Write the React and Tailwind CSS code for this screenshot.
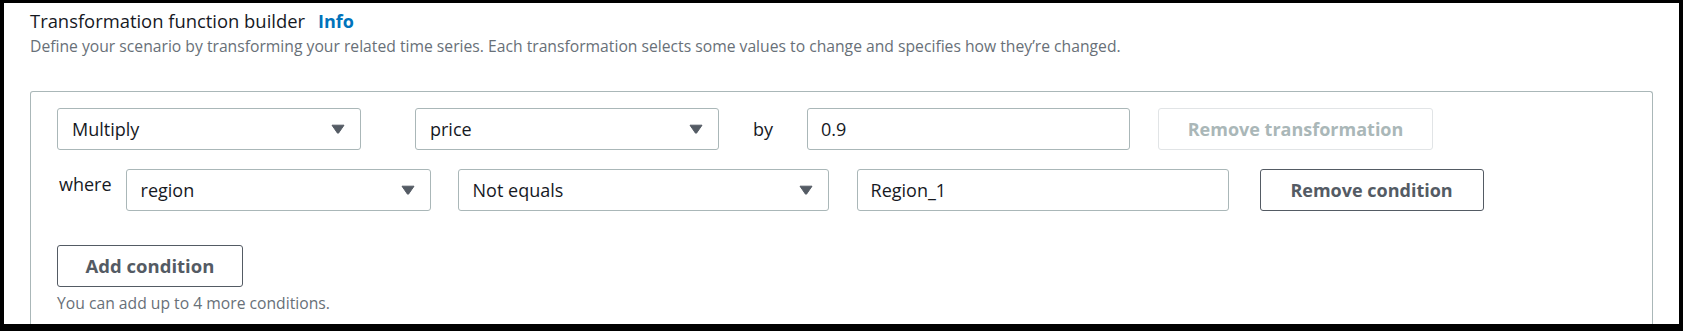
import React from "react";

const font = { fontFamily: '"Open Sans", "Noto Sans", sans-serif' };

function Caret() {
  return (
    <svg width="14" height="10" viewBox="0 0 14 10" className="shrink-0">
      <path d="M1 1.2 L13 1.2 L7.6 9 Q7 9.8 6.4 9 Z" fill="#545b64" stroke="#545b64" strokeWidth="1" strokeLinejoin="round" />
    </svg>
  );
}

function Select({ value, className }) {
  return (
    <div
      className={
        "h-[42px] flex items-center justify-between pl-[14px] pr-[15px] border border-[#aab7b8] rounded-[3px] bg-white text-[18px] text-[#16191f] " +
        className
      }
    >
      <span>{value}</span>
      <Caret />
    </div>
  );
}

function Input({ value, className }) {
  return (
    <div
      className={
        "h-[42px] flex items-center pl-[13px] border border-[#aab7b8] rounded-[3px] bg-white text-[18px] text-[#16191f] " +
        className
      }
    >
      {value}
    </div>
  );
}

export default function App() {
  return (
    <div
      style={font}
      className="w-[1683px] h-[331px] overflow-hidden bg-white border-black border-t-[3px] border-x-4 border-b-[7px] flex flex-col px-[26px] pt-[6px]"
    >
      <div className="flex items-baseline leading-[24px]">
        <span className="text-[18.4px] text-[#16191f]">Transformation function builder</span>
        <span className="ml-[13px] text-[18px] font-bold text-[#0073bb]">Info</span>
      </div>
      <div className="mt-[3px] text-[15.7px] leading-[21px] text-[#687078]">
        Define your scenario by transforming your related time series. Each transformation selects some values to change and specifies how they’re changed.
      </div>
      <div className="mt-[34px] flex-1 border border-b-0 border-[#aab7b8] rounded-t-[3px] pt-[16px] pl-[26px]">
        <div className="flex items-center">
          <Select value="Multiply" className="w-[304px]" />
          <Select value="price" className="w-[304px] ml-[54px]" />
          <span className="ml-[34px] text-[18px] text-[#16191f]">by</span>
          <Input value="0.9" className="w-[323px] ml-[34px]" />
          <div className="ml-[28px] w-[275px] h-[42px] flex items-center justify-center border border-[#e1e4e6] rounded-[3px] text-[18px] font-bold text-[#aab7b8]">
            Remove transformation
          </div>
        </div>
        <div className="mt-[19px] flex items-start">
          <span className="mt-[3px] ml-[2px] text-[18px] leading-[24px] text-[#16191f]">where</span>
          <Select value="region" className="w-[305px] ml-[14px]" />
          <Select value="Not equals" className="w-[371px] ml-[27px]" />
          <Input value="Region_1" className="w-[372px] ml-[28px]" />
          <div className="ml-[31px] w-[224px] h-[42px] flex items-center justify-center border border-[#545b64] rounded-[3px] text-[18px] font-bold text-[#545b64]">
            Remove condition
          </div>
        </div>
        <div className="mt-[34px] w-[186px] h-[42px] flex items-center justify-center border border-[#545b64] rounded-[3px] text-[18.5px] font-bold text-[#545b64]">
          Add condition
        </div>
        <div className="mt-[6px] text-[15.7px] leading-[21px] text-[#687078]">
          You can add up to 4 more conditions.
        </div>
      </div>
    </div>
  );
}
